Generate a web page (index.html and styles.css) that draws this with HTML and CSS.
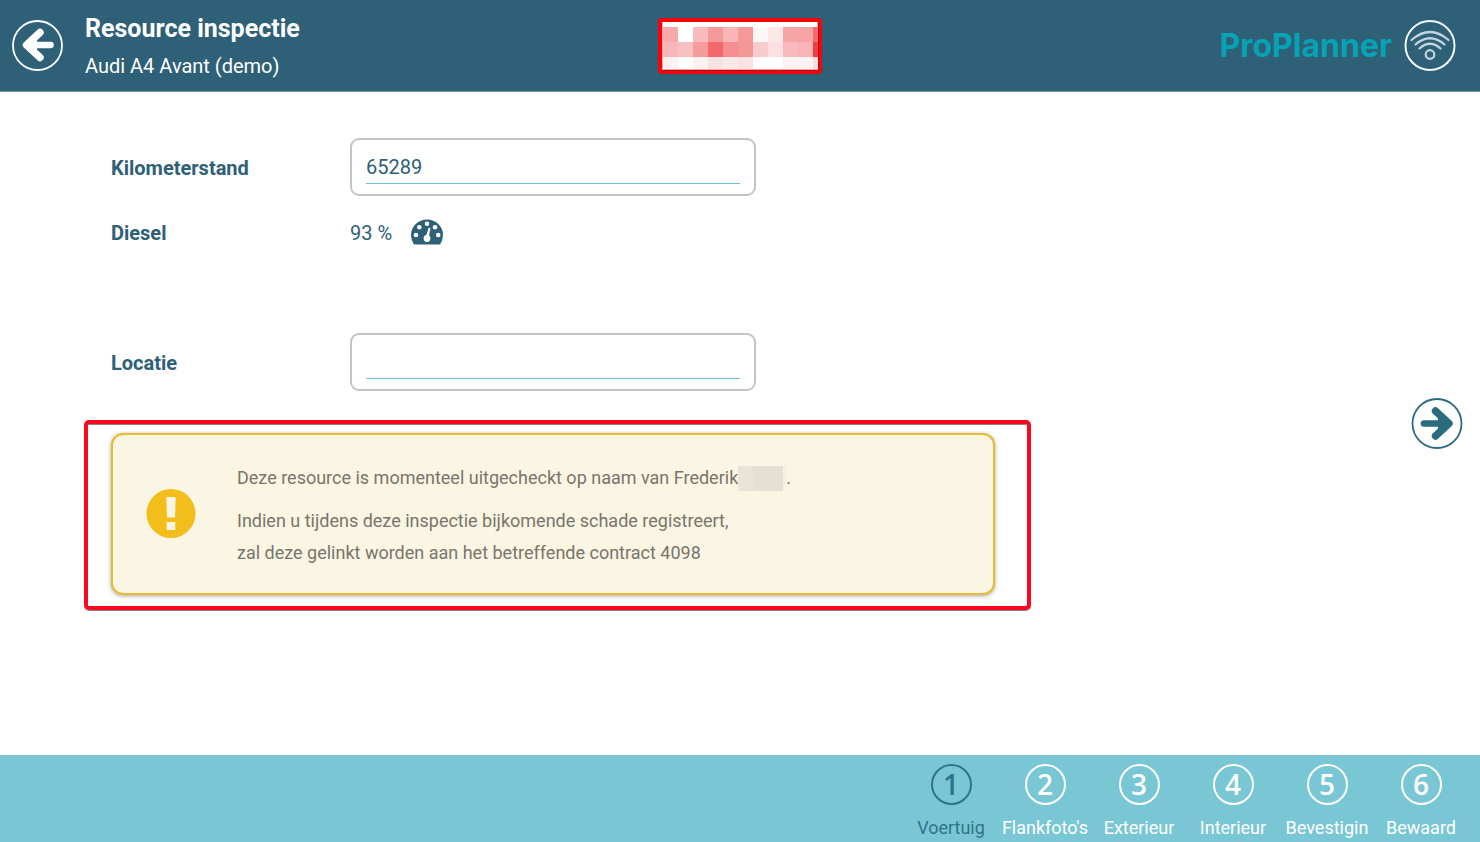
FILE: index.html
```html
<!DOCTYPE html>
<html lang="nl">
<head>
<meta charset="utf-8">
<meta name="viewport" content="width=device-width, initial-scale=1">
<title>Resource inspectie</title>
<link rel="stylesheet" href="styles.css">
</head>
<body>
<header class="topbar">
  <div class="topbar-start">
    <button class="round-button" type="button" aria-label="Terug">
      <svg viewBox="0 0 52 52" width="52" height="52" fill="none" stroke="#fff">
        <circle cx="25.500" cy="25.500" r="24.500" stroke-width="1.800"/>
        <path d="M16 25H38.500" stroke-width="6.600" stroke-linecap="round"/>
        <path d="M28 12.500L14.500 25L28 37.500" stroke-width="7.400" stroke-linecap="round" stroke-linejoin="round"/>
        <path d="M14 25L25 15.500V34.500Z" fill="#fff" stroke="none"/>
      </svg>
    </button>
    <div class="heading">
      <h1 class="title">Resource inspectie</h1>
      <p class="subtitle">Audi A4 Avant (demo)</p>
    </div>
  </div>
  <svg class="client-logo" viewBox="0 0 164 56" width="164" height="56" shape-rendering="crispEdges" aria-hidden="true">
    <rect width="164" height="56" rx="4" fill="#f6040b" shape-rendering="auto"/>
    <path d="M160 3v49H4v1h157V3z" fill="#b50d12"/>
    <rect x="4" y="4" width="156" height="48" fill="#fff"/>
    <path d="M4 51h156v1H4zM159 4h1v48h-1zM4 4h1v48H4z" fill="#e7a8a8"/>
    <path d="M5 9h15v15H5z" fill="#f8a9ac"/><path d="M35 9h15v15H35z" fill="#f8babc"/>
    <path d="M50 9h15v15H50z" fill="#f59a9b"/><path d="M65 9h15v15H65z" fill="#f9b6b8"/>
    <path d="M80 9h15v15H80z" fill="#f59899"/><path d="M95 9h15v15H95z" fill="#fdf7f7"/>
    <path d="M110 9h15v15h-15z" fill="#fce7e9"/><path d="M125 9h30v15h-30z" fill="#f7a4a6"/>
    <path d="M155 9h5v15h-5z" fill="#f26c6e"/>
    <path d="M5 24h15v15H5z" fill="#f8b8ba"/><path d="M20 24h15v15H20z" fill="#f9bfc1"/>
    <path d="M35 24h15v15H35z" fill="#f69c9d"/><path d="M50 24h15v15H50z" fill="#f2686b"/>
    <path d="M65 24h15v15H65z" fill="#f68d90"/><path d="M80 24h15v15H80z" fill="#f49797"/>
    <path d="M95 24h15v15H95z" fill="#f7cccf"/><path d="M110 24h15v15h-15z" fill="#fcdfe2"/>
    <path d="M125 24h15v15h-15z" fill="#fab9bc"/><path d="M140 24h15v15h-15z" fill="#f8b4b7"/>
    <path d="M155 24h5v15h-5z" fill="#ef3d40"/>
    <path d="M5 39h15v12H5zM35 39h15v12H35zM125 39h30v12h-30z" fill="#fef2f2"/>
    <path d="M50 39h15v12H50zM80 39h15v12H80z" fill="#fbe3e4"/><path d="M65 39h15v12H65z" fill="#feeaeb"/>
    <path d="M155 39h5v12h-5z" fill="#fadadb"/>
  </svg>
  <div class="topbar-end">
    <span class="brand">ProPlanner</span>
    <svg viewBox="0 0 52 52" width="52" height="52" fill="none" role="img" aria-label="Verbonden">
      <circle cx="26" cy="25.500" r="24.500" stroke="#f2f7f9" stroke-width="2"/>
      <g stroke="#c3d5de" stroke-width="2.200" stroke-linecap="round">
        <path d="M7.500 20q18.500-16 37 0"/>
        <path d="M11.500 24.500q14.500-12.500 29 0"/>
        <path d="M15.500 28.500q10.500-9.500 21 0"/>
        <circle cx="26" cy="34.500" r="4.300"/>
      </g>
    </svg>
  </div>
</header>

<main class="content">
  <form class="inspection" id="inspection">
    <div class="row">
      <label class="label" for="km">Kilometerstand</label>
      <div class="field"><input class="input" id="km" type="text" inputmode="numeric" value="65289"></div>
    </div>
    <div class="row">
      <span class="label">Diesel</span>
      <div class="fuel">
        <span class="fuel-level">93 %</span>
        <svg viewBox="0 0 32 26" width="32" height="26" aria-hidden="true">
          <path d="M3 25.500Q0 21 0 16A16 15.500 0 0 1 32 16Q32 21 29 25.500Z" fill="#2e6077"/>
          <g fill="#fff">
            <circle cx="5" cy="16" r="2.300"/><circle cx="8.300" cy="8.300" r="2.300"/>
            <circle cx="16" cy="4.800" r="2.300"/><circle cx="24" cy="8.300" r="2.300"/>
            <circle cx="27.200" cy="16" r="2.300"/>
            <circle cx="16" cy="19.500" r="3.400"/><path d="M14.800 17.500L17.700 8.800q1.700-.3 1.700 1.200L17.600 18.500z"/>
          </g>
        </svg>
      </div>
    </div>
    <div class="row row-spaced">
      <label class="label" for="location">Locatie</label>
      <div class="field"><input class="input" id="location" type="text"></div>
    </div>
    <div class="highlight">
      <section class="notice" role="alert">
        <svg viewBox="0 0 50 50" width="50" height="50" aria-hidden="true">
          <circle cx="25" cy="24.500" r="24.500" fill="#f3bd1c"/>
          <path d="M20.300 8h9.400l-.6 20.500h-8.200zM20.700 33h8.600v8h-8.600z" fill="#fbf5e4"/>
        </svg>
        <div class="notice-text">
          <p class="notice-line notice-lead">Deze resource is momenteel uitgecheckt op naam van Frederik<span class="redacted"></span>.</p>
          <p class="notice-line">Indien u tijdens deze inspectie bijkomende schade registreert,<br>zal deze gelinkt worden aan het betreffende contract 4098</p>
        </div>
      </section>
    </div>
  </form>
  <button class="round-button" type="submit" form="inspection" aria-label="Volgende">
    <svg viewBox="0 0 52 52" width="52" height="52" fill="none" stroke="#2a6b7e">
      <circle cx="26" cy="25.500" r="24.500" stroke-width="1.800"/>
      <path d="M13 25.500H36" stroke-width="6.600" stroke-linecap="round"/>
      <path d="M24.500 13L38 25.500L24.500 38" stroke-width="7.400" stroke-linecap="round" stroke-linejoin="round"/>
      <path d="M38 25.500L27 16V35Z" fill="#2a6b7e" stroke="none"/>
    </svg>
  </button>
</main>

<nav class="steps" aria-label="Stappen">
  <button class="step step-active" type="button" aria-current="step"><span class="number">1</span><span>Voertuig</span></button>
  <button class="step" type="button"><span class="number">2</span><span>Flankfoto's</span></button>
  <button class="step" type="button"><span class="number">3</span><span>Exterieur</span></button>
  <button class="step" type="button"><span class="number">4</span><span>Interieur</span></button>
  <button class="step" type="button"><span class="number">5</span><span>Bevestigin</span></button>
  <button class="step" type="button"><span class="number">6</span><span>Bewaard</span></button>
</nav>
</body>
</html>
```
FILE: styles.css
```css
* {
  box-sizing: border-box;
}

body {
  display: flex;
  flex-direction: column;
  min-height: 100vh;
  margin: 0;
  background: #fff;
  color: #2e6077;
  font-family: Roboto, "Liberation Sans", sans-serif;
  font-size: 20px;
}

h1,
p {
  margin: 0;
}

svg {
  display: block;
  flex: none;
}

button {
  padding: 0;
  border: 0;
  background: none;
  color: inherit;
  font: inherit;
  cursor: pointer;
}

.topbar {
  display: grid;
  grid-template-columns: 1fr auto 1fr;
  align-items: center;
  gap: 16px;
  min-height: 92px;
  padding: 0 12px;
  border-bottom: 1px solid #7796a5;
  background: #2e6077;
  color: #fff;
}

.topbar-start {
  display: flex;
  align-items: center;
  gap: 21px;
}

.title {
  font-size: 25px;
  font-weight: 700;
  line-height: 40px;
}

.subtitle {
  line-height: 34px;
}

.topbar-end {
  display: flex;
  align-items: center;
  justify-content: flex-end;
  gap: 12px;
  padding-right: 12px;
}

.brand {
  color: #05a3b5;
  font-family: Inter, sans-serif;
  font-size: 32px;
  font-weight: 700;
}

.content {
  display: flex;
  flex: 1;
  align-items: center;
  justify-content: space-between;
  gap: 24px;
  padding: 0 17px 0 84px;
}

.inspection {
  flex: 1;
  align-self: flex-start;
  max-width: 947px;
  padding: 42px 0 24px;
}

.row {
  display: grid;
  grid-template-columns: 239px minmax(0, 406px);
  align-items: center;
  min-height: 65px;
  padding-left: 27px;
}

.row-spaced {
  margin-top: 65px;
}

.label,
.fuel-level {
  padding-top: 2px;
}

.label {
  font-weight: 700;
}

.field {
  display: flex;
  height: 58px;
  padding: 10px 14px;
  border: 2px solid #c4c4c4;
  border-radius: 9px;
}

.input {
  width: 100%;
  padding: 2px 0 0;
  border: 0;
  border-bottom: 1px solid #6ec3d0;
  outline: 0;
  background: none;
  color: inherit;
  font: inherit;
}

.fuel {
  display: flex;
  align-items: center;
  gap: 19px;
}

.highlight {
  margin-top: 26px;
  padding: 9px 32px 11px 23px;
  border: 4px solid #fb0720;
  border-radius: 5px;
  box-shadow: 0 1px 0 #8a7f8a, inset 0 1px 0 #8a7f8a;
}

.notice {
  display: flex;
  align-items: center;
  gap: 41px;
  min-height: 162px;
  padding: 0 33px;
  border: 2px solid #e9bc31;
  border-radius: 12px;
  background: #fbf5e4;
  box-shadow: 0 1px 4px rgb(0 0 0 / 35%);
  color: #78756c;
}

.notice-text {
  padding-top: 2px;
  font-size: 18px;
  line-height: 32px;
}

.notice-lead {
  margin-bottom: 11px;
}

.redacted {
  display: inline-block;
  width: 48px;
  height: 25px;
  background: linear-gradient(90deg, #eae3d7 0 15px, #e6dfd3 15px 45px, #f6f0e2 45px);
  vertical-align: middle;
}

.steps {
  display: flex;
  justify-content: flex-end;
  min-height: 87px;
  padding: 9px 12px 0 0;
  background: #79c7d4;
  color: #fff;
}

.step {
  display: flex;
  flex-direction: column;
  align-items: center;
  gap: 11px;
  width: 94px;
  font-size: 18px;
  line-height: 24px;
}

.step-active {
  color: #2e7489;
}

.number {
  display: flex;
  align-items: center;
  justify-content: center;
  width: 41px;
  height: 41px;
  padding-bottom: 2px;
  border: 2px solid;
  border-radius: 50%;
  font-family: "Open Sans", sans-serif;
  font-size: 28px;
  font-weight: 600;
}
```
